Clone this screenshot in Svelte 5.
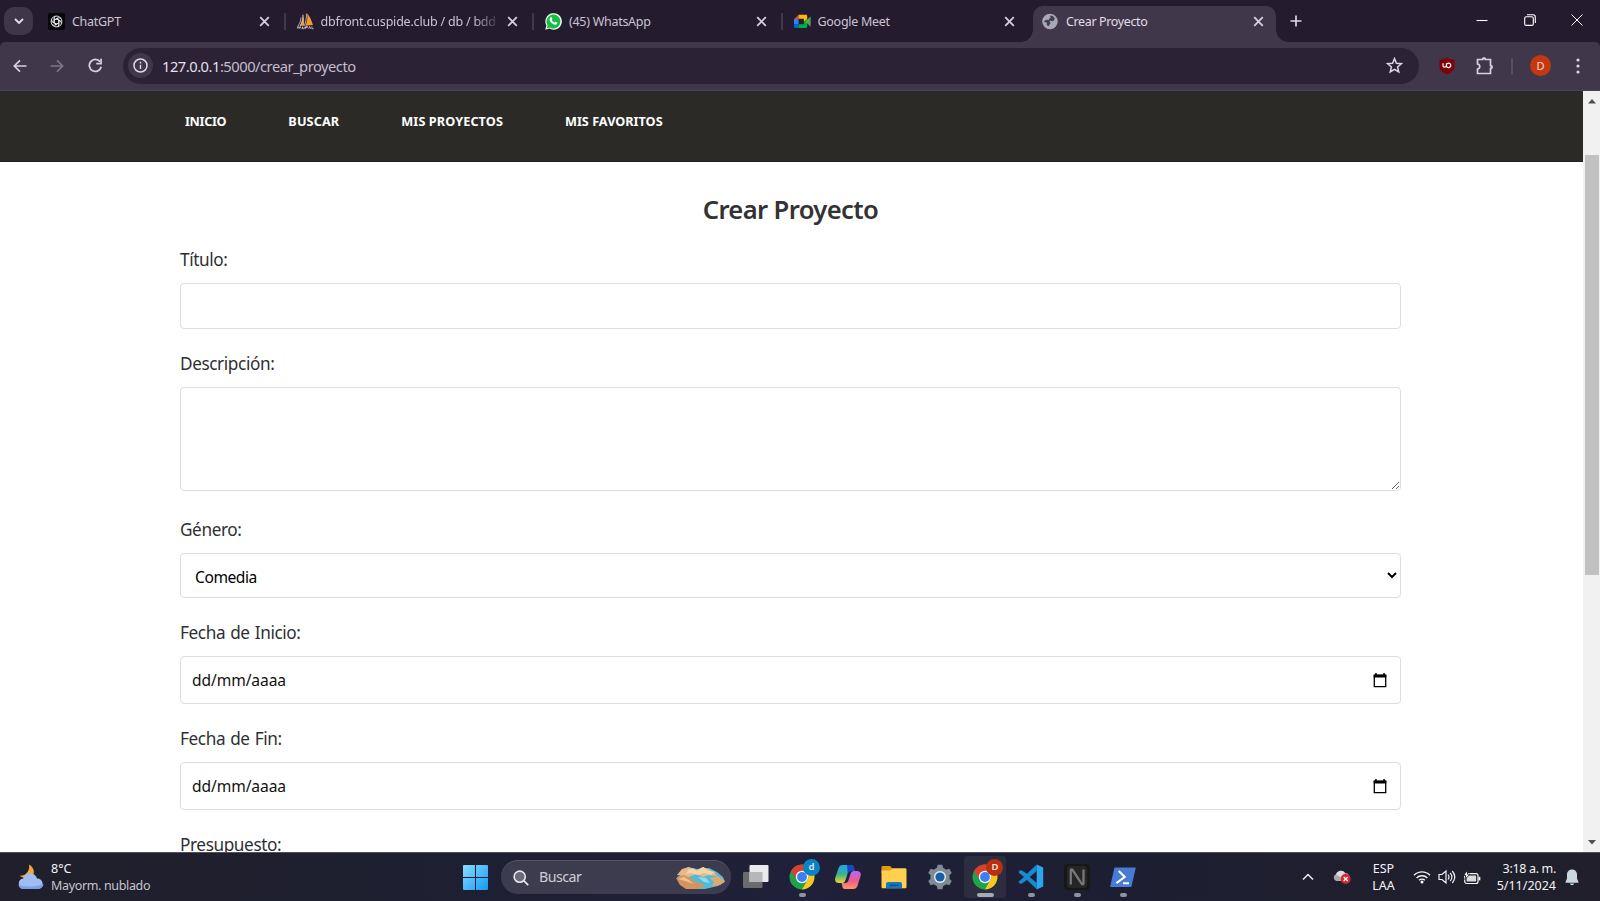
<script>
  const tabs = [
    { icon: 'gpt', title: 'ChatGPT' },
    { icon: 'sail', title: 'dbfront.cuspide.club / db / bdd', fade: true },
    { icon: 'whatsapp', title: '(45) WhatsApp' },
    { icon: 'meet', title: 'Google Meet' },
    { icon: 'globe', title: 'Crear Proyecto', active: true }
  ];
  const nav = ['INICIO', 'BUSCAR', 'MIS PROYECTOS', 'MIS FAVORITOS'];
  const apps = [
    { icon: 'taskview' },
    { icon: 'chrome', badge: 'd', color: '#0784c8', run: true },
    { icon: 'copilot' },
    { icon: 'folder' },
    { icon: 'gear' },
    { icon: 'chrome', badge: 'D', color: '#b8300f', run: true, active: true },
    { icon: 'vscode', run: true },
    { icon: 'notion', run: true },
    { icon: 'powershell', run: true }
  ];
</script>

{#snippet favicon(name)}
  <svg class="favicon" viewBox="0 0 16 16" width="17" height="17">
    {#if name === 'gpt'}
      <rect width="16" height="16" rx="2" fill="#08080a" />
      <g fill="none" stroke="#e8e8e8" stroke-width=".9" transform="translate(8 8)">
        {#each [0, 60, 120, 180, 240, 300] as a}
          <path transform="rotate({a})" d="M-2.2 1.3V-2.6a2.6 2.6 0 0 1 3.9-2.2L4 -3.4M-2.2-1.3 1.5-3.4" />
        {/each}
      </g>
    {:else if name === 'sail'}
      <path d="M5.7 1.2C6 5 4.6 9 2.4 12h4.2C6.9 8 6.7 4 5.7 1.2zM9.4.2c.8 4 .3 8-1.6 11.8L15 11.3C13.8 7 12 3 9.4.2z" fill="#f29a2e" />
      <path d="M3.8 4.2C3.6 7.4 2.6 10 .8 12.4M5.5 1.5C5.6 6 4.8 9 3.2 12M8.8.6C9 5 8.4 9 6.8 12" fill="none" stroke="#c9c3cf" stroke-width=".8" />
      <path d="M0 14.8l1-2.2 1 2 1-2 1 2.2M5.2 12.8v2h1.6v-2M8 14.8v-2h1.8v1H8M11 14.8l.9-2.2.9 2.2M14 12.6v2.2h1.6" fill="none" stroke="#bdb8c8" stroke-width=".9" />
    {:else if name === 'whatsapp'}
      <path d="M.2 15.8 1.3 11.8A7.8 7.8 0 1 1 4.2 14.7z" fill="#f2f5f2" />
      <path d="m1.7 14.3.8-2.7A6.5 6.5 0 1 1 4.6 13.6z" fill="#16bd45" />
      <path d="M5.2 4.2c.4-.5 1-.4 1.2.1l.6 1.4-.7 1c.5 1.1 1.4 1.9 2.6 2.4l.8-.9 1.7.8c.4.2.2 1-.2 1.4-1 .9-2.3.6-3.7-.1-1.3-.7-2.3-1.8-2.900-3-.6-1.200-.3-2.300.6-3.100z" fill="#fff" />
    {:else if name === 'meet'}
      <path d="M0 5.500h4.300v5.200H0z" fill="#2684fc" />
      <path d="M0 10.500h4.300V14H1.200A1.200 1.200 0 0 1 0 12.800z" fill="#0066da" />
      <path d="M0 5.800 4.300 1.600v4.200z" fill="#ea4335" />
      <path d="M4.300 1.600h6.800c.8 0 1.300.5 1.300 1.200v3.500L9.300 8V5.500h-5z" fill="#ffba00" />
      <path d="M4.300 10.500h5V8l3.100-2.300v7.100c0 .7-.5 1.200-1.300 1.200H4.300z" fill="#00ac47" />
      <path d="m10.500 8 5.200-4.600V13z" fill="#4fa35a" />
    {:else}
      <circle cx="7.500" cy="8" r="7.300" fill="#a7a8b5" />
      <path d="M8.600 2.400c-1.500.3-1.200 1.400-.2 1.700-.2 1-1.700.7-1.700 2-.5.8-1.600.2-2.700.4-1.400.2-2 1.200-1.900 2.100.7.500 1.800-.2 2.400.7.300.8-.3 1.300.2 2.300l1.700.9c.3-.7.100-1.600 1-2 .9-.4.6-1.200.1-1.800-.4-.6-.4-1.100.4-1.300.9-.2 1.700.6 2.500.3 1.200-.5.700-1.500 1.700-2-.3-1.400-1.600-2.900-3.500-3.300z" fill="#463f52" />
    {/if}
  </svg>
{/snippet}

{#snippet cross(size = 13)}
  <svg class="cross" viewBox="0 0 14 14" width={size} height={size}><path d="m3 3 8 8m0-8-8 8" fill="none" stroke="#d6cede" stroke-width="1.700" /></svg>
{/snippet}

{#snippet appIcon(name)}
  <svg viewBox="0 0 26 26" width="26" height="26">
    {#if name === 'taskview'}
      <rect x="0" y="8" width="19.500" height="16" rx="1" fill="#6c6b6c" />
      <rect x="6.500" y="1" width="19" height="17" rx="1" fill="#e9eaec" />
      <path d="M6.500 8h13v10h-13z" fill="#b7b7b9" />
    {:else if name === 'chrome'}
      <circle cx="13" cy="13" r="12.500" fill="#1fa34a" />
      <path d="M2.200 6.800A12.500 12.500 0 0 1 23.800 6.800H13A6.200 6.200 0 0 0 7.600 16.100z" fill="#e33b2e" />
      <path d="M23.800 6.800A12.500 12.500 0 0 1 13 25.500L18.400 16.100A6.200 6.200 0 0 0 13 6.800z" fill="#fcc61d" />
      <circle cx="13" cy="13" r="6.200" fill="#f6f8fa" />
      <circle cx="13" cy="13" r="4.900" fill="#3d7ff0" />
    {:else if name === 'copilot'}
      <defs>
        <linearGradient id="cpa" x1="0" y1="0" x2="0" y2="1"><stop offset="0" stop-color="#1ca7ee" /><stop offset=".5" stop-color="#35b391" /><stop offset="1" stop-color="#f2d12a" /></linearGradient>
        <linearGradient id="cpb" x1="0" y1="0" x2="0" y2="1"><stop offset="0" stop-color="#b666ef" /><stop offset=".55" stop-color="#ee5b91" /><stop offset="1" stop-color="#ff9a5b" /></linearGradient>
      </defs>
      <path d="M8 1h8c2 0 2.500 1.500 3 4l.5 2h-4c-2 0-2.500 1-3 3l-2 6c-.8 2.500-2 3-4 3H4c-3 0-4.500-2-3.800-5L3.400 4.500C4.200 2 5.500 1 8 1z" fill="url(#cpa)" />
      <path d="M12 1h4.500c2 0 2.500 2 3 4l.5 2h-4c-2 0-2.500 1-3.200 3.200z" fill="#1649c7" />
      <path d="M18 25h-8c-2 0-2.500-1.500-3-4l-.5-2h3.500c2 0 3-1 3.500-3l2-6c.7-2.300 1.700-3 3.500-3h3c3 0 4.300 2 3.600 5l-3 9.500C21.800 24 20.500 25 18 25z" fill="url(#cpb)" />
    {:else if name === 'folder'}
      <path d="M.5 3.500c0-1 .5-1.500 1.500-1.500h7l2.500 2.700V9H.5z" fill="#df9b11" />
      <path d="M.5 6.500h8.800l2.200-2.300H24c1 0 1.500.5 1.500 1.500v17c0 1-.5 1.500-1.500 1.500H2c-1 0-1.500-.5-1.500-1.500z" fill="#ffd04f" />
      <path d="M5 24.200V20c0-1.300.8-2 2-2h12c1.200 0 2 .7 2 2v4.200z" fill="#1678bf" />
      <path d="M8.500 21.300h9" stroke="#0b4a7e" stroke-width="1.300" />
    {:else if name === 'gear'}
      <g fill="#818b94">
        {#each [0, 60, 120] as a}<path transform="rotate({a} 13 13)" d="M10.600.8h4.800l1.100 5h-7zM9.500 20.200h7l-1.100 5h-4.800z" />{/each}
        <circle cx="13" cy="13" r="9.700" />
      </g>
      <circle cx="13" cy="13" r="6" fill="#e6edf2" /><circle cx="13" cy="13" r="4.600" fill="#1560a6" />
    {:else if name === 'vscode'}
      <path d="M18.700.6 9 9.800 3 5.900.8 7.300v1.500L6 13 .8 17.400v1.400L3 20l6-4 9.700 9.300V19L11.700 13l7-6z" fill="#168bd2" />
      <path d="M18.700.6 25.200 3.600v18.900l-6.500 2.900z" fill="#2ca5ec" />
    {:else if name === 'notion'}
      <rect width="26" height="26" rx="4" fill="#171717" />
      <rect x="3" y="2" width="20" height="22" rx="3" fill="#262626" />
      <path d="M6.800 20.500V6.300c0-1.200 1-1.300 1.800-.3l9 13.600c.7 1 1.900.9 1.900-.3V5.500" fill="none" stroke="#77777a" stroke-width="2.300" />
    {:else}
      <path d="M5.500 3.500h19.300c.7 0 1 .4.800 1.100l-4 17.300c-.2.800-.6 1.100-1.400 1.100H1.100c-.7 0-1-.4-.8-1.100l3.900-17.300c.2-.8.6-1.100 1.300-1.100z" fill="#477bd4" />
      <path d="m8.700 7 6 6-8.300 6.200M13 19.200h6" fill="none" stroke="#fff" stroke-width="2.100" />
    {/if}
  </svg>
{/snippet}

<div class="screen">
  <div class="tabstrip">
    <div class="tabsearch"><svg viewBox="0 0 10 10" width="10" height="10"><path d="m1 3 4 4 4-4" fill="none" stroke="#e4dcea" stroke-width="1.900" /></svg></div>
    <div class="tabs">
      {#each tabs as t, i}
        <div class="tab" class:active={t.active} class:sep={i < 3}>
          {@render favicon(t.icon)}
          <span class="tabtitle" class:fade={t.fade}>{t.title}</span>
          {@render cross(15)}
        </div>
      {/each}
    </div>
    <svg class="plus" viewBox="0 0 12 12" width="12" height="12"><path d="M6 .500v11M.500 6h11" stroke="#ddd5e4" stroke-width="1.700" /></svg>
    <div class="winbtns">
      <svg viewBox="0 0 12 12" width="12" height="12"><path d="M.500 6.500h11" stroke="#fff" stroke-width="1.100" /></svg>
      <svg viewBox="0 0 12 12" width="12" height="12"><g fill="none" stroke="#fff" stroke-width="1.100"><rect x=".700" y="2.800" width="8.600" height="8.600" rx="1.500" /><path d="M3 .700h6a2.300 2.300 0 0 1 2.300 2.300v6" /></g></svg>
      <svg viewBox="0 0 12 12" width="12" height="12"><path d="m.500.500 11 11m0-11-11 11" stroke="#fff" stroke-width="1" /></svg>
    </div>
  </div>

  <div class="toolbar">
    <svg class="nb" viewBox="0 0 14 14" width="14" height="14"><path d="M13.500 7H1.500M7 1.300 1.300 7 7 12.700" fill="none" stroke="#d8cfe0" stroke-width="1.700" /></svg>
    <svg class="nb" viewBox="0 0 14 14" width="14" height="14"><path d="M.500 7h12M7 1.300 12.700 7 7 12.700" fill="none" stroke="#7e7489" stroke-width="1.700" /></svg>
    <svg class="nb" viewBox="0 0 14 14" width="15" height="15"><path d="M12.300 8.200A5.600 5.600 0 1 1 11.300 3.500" fill="none" stroke="#d8cfe0" stroke-width="1.700" /><path d="M13 .600V6H7.700V4.500h3.700V.600z" fill="#d8cfe0" /></svg>
    <div class="urlbar">
      <div class="info"><svg viewBox="0 0 14 14" width="15" height="15"><circle cx="7" cy="7" r="6.100" fill="none" stroke="#e1d9e8" stroke-width="1.400" /><path d="M7 6.200v4M7 3.600v1.500" stroke="#e1d9e8" stroke-width="1.300" /></svg></div>
      <span class="url"><b>127.0.0.1</b>:5000/crear_proyecto</span>
      <svg class="star" viewBox="0 0 16 16" width="17" height="17"><path d="m8 1.500 1.800 4.400 4.700.4-3.600 3.100 1.100 4.700L8 11.600 4 14.100l1.100-4.700L1.500 6.300l4.700-.4z" fill="none" stroke="#ddd5e4" stroke-width="1.400" /></svg>
    </div>
    <svg class="ublock" viewBox="0 0 16 18" width="16" height="18"><path d="M8 .500C10 2 12.500 2.600 15.500 2.500v7c0 4-3.500 6-7.500 8C4 15.500.500 13.500.500 9.500v-7C3.500 2.600 6 2 8 .500z" fill="#7d0305" /><path d="M4 6.200v2.300q0 1.700 1.600 1.700T7.400 8.500V6.200M7.400 8.200A2.200 2.200 0 1 0 9.600 6.200Q8.200 6.200 7.400 7.500" fill="none" stroke="#fff" stroke-width="1.200" /></svg>
    <svg class="puzzle" viewBox="0 0 18 19" width="18" height="19"><path d="M1.500 3.500h5a1.500 1.500 0 0 1 3 0h5v6a1.500 1.500 0 0 1 0 3v5h-13v-4.500c3-.400 3-4.600 0-5z" fill="none" stroke="#d8cfe0" stroke-width="1.700" /><path d="M6 3.500a2 2 0 0 1 4 0zM14.500 9a2 2 0 0 1 0 4z" fill="#d8cfe0" /></svg>
    <i class="divider"></i>
    <div class="avatar">D</div>
    <svg class="dots" viewBox="0 0 4 16" width="4" height="16"><circle cx="2" cy="2" r="1.600" /><circle cx="2" cy="8" r="1.600" /><circle cx="2" cy="14" r="1.600" /></svg>
  </div>

  <div class="viewport">
    <div class="page">
      <nav>{#each nav as n, i}<span class="n{i}">{n}</span>{/each}</nav>
      <form>
        <h2>Crear Proyecto</h2>
        <label for="titulo">Título:</label>
        <input id="titulo" type="text" />
        <label for="desc">Descripción:</label>
        <textarea id="desc"></textarea>
        <label for="genero">Género:</label>
        <select id="genero"><option>Comedia</option></select>
        {#each ['Fecha de Inicio:', 'Fecha de Fin:'] as f}
          <div class="label">{f}</div>
          <div class="date">
            <span>dd/mm/aaaa</span>
            <svg viewBox="0 0 14 15" width="14" height="15"><path d="M1.300 2.500h11.400v11.200H1.300z" fill="none" stroke="#000" stroke-width="1.300" /><path d="M.700 1.500h12.600v3H.700zM2.200 0h1.500v2H2.200zM10.300 0h1.500v2h-1.500z" /></svg>
          </div>
        {/each}
        <div class="label">Presupuesto:</div>
      </form>
    </div>
    <div class="scrollbar">
      <svg viewBox="0 0 8 5" width="8" height="5"><path d="M4 0 8 4.500H0z" fill="#505050" /></svg>
      <div class="track"><div class="thumb"></div></div>
      <svg viewBox="0 0 8 5" width="8" height="5"><path d="M4 4.500 8 0H0z" fill="#505050" /></svg>
    </div>
  </div>

  <div class="taskbar">
    <div class="weather">
      <svg viewBox="0 0 26 26" width="26" height="26"><path d="M11 .500c4.500 2.500 6 7 4 11.500L7 14.500.800 11.500C6 13 12.500 8 11 .500z" fill="#f2a93b" /><path d="M5.500 25a5.300 5.300 0 0 1-.300-10.500C6.500 10.500 10 9 13 9.500c3 .300 5.200 2.300 6 5a5.300 5.300 0 0 1 1.300 10.500z" fill="#9fbcf3" /><path d="M5.500 25a5.300 5.300 0 0 1-5-4c5 2 19 2 25-1a5.300 5.300 0 0 1-5.200 5z" fill="#7fa0e6" /></svg>
      <div class="wtext"><span>8°C</span><span class="w1">Mayorm. nublado</span></div>
    </div>
    <svg class="start" viewBox="0 0 25 25" width="25" height="25"><defs><linearGradient id="wg" x1="0" y1="0" x2="1" y2="1"><stop offset="0" stop-color="#8bdcff" /><stop offset="1" stop-color="#119af5" /></linearGradient></defs><path d="M0 1q0-1 1-1h11v12H0zM13 0h11q1 0 1 1v11H13zM0 13h12v12H1q-1 0-1-1zM13 13h12v11q0 1-1 1H13z" fill="url(#wg)" /></svg>
    <div class="search">
      <svg viewBox="0 0 16 16" width="16" height="16"><circle cx="6.700" cy="6.700" r="5.600" fill="#6b6a7a" stroke="#e5e5ea" stroke-width="1.600" /><path d="m10.700 10.700 4.500 4.500" stroke="#e5e5ea" stroke-width="1.700" /></svg>
      <span>Buscar</span>
      <svg class="beach" viewBox="0 0 49 23" width="49" height="23">
        <path d="M5 5 12 1l9 2 12-1 8 4 6 5 2 5-7 4-13 3H13L4 18 1 11l4-2z" fill="#57b9d3" />
        <path d="m1 9 5-6 7-2 5 4 9-4 7 3 4 2 3 4-8-1-6 2-7-3-7 3-6-1z" fill="#e6b98c" />
        <path d="M12 4q5-4 9 1l6-4 6 4 6 1-4 3-7-2-6 2-7-2-5 1z" fill="#f5d4ac" />
        <path d="m0 12 8-3 6 3 5 4 8 2 1 3-7 2H10L4 19z" fill="#d4945f" />
        <path d="m2 13 6-2 5 3 5 4-9-3z" fill="#efbf8d" />
        <path d="m34 12 8-2 7 5-5 4-8 1 2-4z" fill="#e0a873" />
        <path d="m22 11 8 1 4 5-6-1z" fill="#8be0ec" />
      </svg>
    </div>
    <div class="apps">
      {#each apps as a}
        <div class="app" class:active={a.active}>
          {@render appIcon(a.icon)}
          {#if a.badge}<b class="badge" style="background:{a.color}">{a.badge}</b>{/if}
          {#if a.run}<i></i>{/if}
        </div>
      {/each}
    </div>
    <div class="tray">
      <svg class="chev" viewBox="0 0 12 8" width="12" height="8"><path d="m1 6.500 5-5 5 5" fill="none" stroke="#eee" stroke-width="1.500" /></svg>
      <svg class="cloud" viewBox="0 0 18 14" width="18" height="14"><path d="M3.500 11A3.500 3.500 0 0 1 3 4.300C4.500.500 9.500-.500 12 3c3 0 4.500 2 4.500 4.500L10 11z" fill="#aaa9ae" /><path d="M3 4.500C4.500.500 9.500-.500 12 3L7 7z" fill="#dddcdf" /><circle cx="12.700" cy="9" r="4.900" fill="#d9252f" /><path d="m10.700 7 4 4m0-4-4 4" stroke="#fff" stroke-width="1.300" /></svg>
      <div class="lang"><span>ESP</span><span>LAA</span></div>
      <svg viewBox="0 0 18 14" width="18" height="14"><g fill="none" stroke="#f2f2f4" stroke-width="1.400"><path d="M1 5.200a11.200 11.200 0 0 1 16 0M3.600 8a7.600 7.600 0 0 1 10.800 0M6.100 10.300a4.200 4.200 0 0 1 5.800 0" /></g><circle cx="9" cy="12" r="1.500" fill="#fff" /></svg>
      <svg viewBox="0 0 18 16" width="18" height="16"><g fill="none" stroke="#f2f2f4" stroke-width="1.200"><path d="M1 5.500h3L8 2v12l-4-3.500H1zM10 5.500q2 2.500 0 5M12.200 3.800q3.500 4.200 0 8.400M14.300 2q5 6 0 12" /></g></svg>
      <svg viewBox="0 0 18 15" width="18" height="15"><rect x="1.700" y="3.700" width="13.300" height="9.800" rx="2" fill="none" stroke="#f6f6f7" stroke-width="1.200" /><rect x="3.600" y="5.600" width="9.500" height="6" rx=".600" fill="#dcdce0" /><path d="M16.400 6.800v3.600" stroke="#eee" stroke-width="1.900" /><path d="M4.500.200.600 5.500h2.200L1.800 9.500 7 4.200H4.500z" fill="#fff" stroke="#1f1e2c" stroke-width=".900" /></svg>
      <div class="clock"><span class="c0">3:18 a. m.</span><span>5/11/2024</span></div>
      <svg class="bell" viewBox="0 0 14 17" width="14" height="17"><path d="M7 .500c-3 0-5 2.300-5 5v4L.500 13v.800h13V13L12 9.500v-4c0-2.700-2-5-5-5zM4.800 14.600a2.300 2.300 0 0 0 4.400 0z" fill="#ccd6de" /></svg>
    </div>
  </div>
</div>

<style>
  :global(body) { margin: 0; overflow: hidden; }
  * { box-sizing: border-box; }
  svg { display: block; flex: none; }
  .screen { width: 1600px; height: 901px; display: flex; flex-direction: column; font-family: "Noto Sans", "Open Sans", sans-serif; white-space: nowrap; background: #fff; overflow: hidden; }
  .tabstrip { height: 42px; flex: none; background: #241c2e; display: flex; align-items: flex-start; position: relative; z-index: 1; }
  .tabsearch { width: 29px; height: 28px; margin: 7px 0 0 4px; border-radius: 10px; background: #3f364a; display: grid; place-items: center; }
  .tabs { display: flex; margin: 6px 0 0 6px; }
  .tab { width: 248.500px; height: 36px; display: flex; align-items: center; position: relative; padding: 0 16px 6px 9px; }
  .tab.sep::after { content: ""; position: absolute; right: 2px; top: 7px; width: 2px; height: 17px; background: #40384b; }
  .tab.active { background: #40374b; border-radius: 10px 10px 0 0; width: 243px; padding-right: 10px; }
  .tab.active::before, .tab.active::after { content: ""; position: absolute; bottom: 0; width: 12px; height: 12px; }
  .tab.active::before { left: -12px; background: radial-gradient(circle at 0 0, transparent 11.500px, #40374b 12px); }
  .tab.active::after { right: -12px; background: radial-gradient(circle at 100% 0, transparent 11.500px, #40374b 12px); }
  .tabtitle { margin-left: 7px; padding-top: 1px; flex: 1; font-size: 12.500px; letter-spacing: -.28px; color: #cbc2d3; overflow: hidden; line-height: 20px; }
  .tabtitle.fade { letter-spacing: -.21px; max-width: 175px; margin-right: auto; -webkit-mask-image: linear-gradient(90deg, #000 152px, rgba(0, 0, 0, .2) 175px); mask-image: linear-gradient(90deg, #000 152px, rgba(0, 0, 0, .2) 175px); }
  .active .tabtitle { color: #e2dce8; letter-spacing: -.37px; }
  .plus { margin: 15px 0 0 14px; }
  .winbtns { margin: 14px 17px 0 auto; display: flex; gap: 35.500px; }

  .toolbar { height: 49px; flex: none; background: #40374b; border-bottom: 1px solid #4b4354; border-radius: 5px 5px 0 0; display: flex; align-items: center; padding-bottom: 1px; box-shadow: 0 -5px 0 0 #241c2e; }
  .nb:nth-child(1) { margin-left: 13px; }
  .nb:nth-child(2) { margin-left: 23px; }
  .nb:nth-child(3) { margin-left: 24px; }
  .urlbar { margin-left: 20px; width: 1296px; height: 36px; border-radius: 18px; background: #2b2335; display: flex; align-items: center; padding: 0 16px 0 5px; }
  .info { width: 25px; height: 25px; border-radius: 50%; background: #40374b; display: grid; place-items: center; }
  .url { margin-left: 9px; font-size: 14.700px; letter-spacing: -.48px; color: #c5bccd; }
  .url b { font-weight: 400; color: #e6dfec; }
  .star { margin-left: auto; }
  .ublock { margin-left: 20px; }
  .puzzle { margin-left: 21px; }
  .divider { width: 2px; height: 16px; margin-left: 17px; background: #574d62; }
  .avatar { width: 21px; height: 21px; margin-left: 17px; border-radius: 50%; background: #c5380f; color: #f8d9cf; font-size: 11px; line-height: 21px; text-align: center; }
  .dots { margin-left: 25px; fill: #ded6e4; }

  .viewport { height: 761px; flex: none; display: flex; overflow: hidden; }
  .page { flex: 1; overflow: hidden; background: #fff; }
  nav { height: 71px; background: #2c2a27; border-bottom: 1px solid #24211f; padding: 20px 0 0 185px; display: flex; gap: 62px; color: #fff; font-size: 12.700px; font-weight: 700; line-height: 20px; }
  nav span { flex: none; }
  .n0 { letter-spacing: -.33px; }
  .n1 { letter-spacing: .12px; }
  .n2 { letter-spacing: .08px; }
  form { width: 1221px; margin-left: 180px; display: flex; flex-direction: column; color: #2d3033; }
  h2 { margin: 0; height: 63px; padding-top: 28px; line-height: 40px; text-align: center; font-size: 25.600px; letter-spacing: -.62px; font-weight: 600; color: #333; }
  label, .label { height: 58px; flex: none; padding: 21px 0 0 0; font-size: 17.200px; letter-spacing: -.4px; word-spacing: 1px; line-height: 28px; }
  input, textarea, select, .date { width: 100%; flex: none; border: 1px solid #ddd; border-radius: 4px; background: #fff; font-family: inherit; font-size: 15.600px; color: #000; margin: 0; outline: 0; }
  input { height: 46px; }
  textarea { height: 104px; margin-bottom: 4px; resize: both; display: block; }
  select { height: 45px; padding: 11px 1px 10px 10px; letter-spacing: -.45px; }
  .date { height: 48px; display: flex; align-items: center; justify-content: space-between; padding: 0 13px 0 11px; letter-spacing: -.1px; color: #111; }
  .scrollbar { width: 17px; background: #f1f1f1; display: flex; flex-direction: column; align-items: center; padding: 8px 0 7px; }
  .track { flex: 1; width: 14px; padding-top: 51px; }
  .thumb { height: 420px; background: #c1c1c1; }

  .taskbar { height: 49px; flex: none; background: linear-gradient(90deg, #201f2b, #1e1f30 25%, #20203a 50%, #1d1e31 70%, #201f2b); border-top: 1px solid #504f5b; display: flex; align-items: center; color: #f4f4f6; font-size: 12.500px; }
  .weather { width: 463px; padding-left: 18px; display: flex; align-items: center; gap: 7px; }
  .wtext { display: flex; flex-direction: column; line-height: 17px; align-items: flex-start; padding-bottom: 1px; }
  .w1 { color: #c5c5cb; letter-spacing: -.35px; }
  .search { margin-left: 13px; width: 230px; height: 34px; border-radius: 17px; background: #3d3c4e; border-top: 1px solid #555465; display: flex; align-items: center; padding: 0 6px 0 12px; font-size: 14.200px; letter-spacing: -.5px; color: #cfced6; }
  .search span { margin-left: 10px; padding-bottom: 2px; }
  .beach { margin-left: auto; }
  .apps { display: flex; margin-left: 4px; gap: 3.900px; }
  .app { width: 42px; height: 42px; border-radius: 4px; display: grid; place-items: center; position: relative; }
  .app.active { background: #2d2d40; }
  .badge { position: absolute; right: 3px; top: 3px; width: 17px; height: 17px; border-radius: 50%; font-size: 9.500px; line-height: 16px; text-align: center; color: #f3e4df; font-weight: 600; }
  .app i { position: absolute; bottom: 1px; left: 18px; width: 7px; height: 4px; border-radius: 2px; background: #92929e; }
  .app.active i { left: 13px; width: 17px; background: #a5a8b6; }
  .tray { margin-left: auto; display: flex; align-items: center; padding-right: 21px; }
  .tray > svg { margin-right: 7px; }
  .tray > .chev { margin-right: 19px; }
  .tray > .cloud { margin-right: 21px; }
  .lang { width: 23px; text-align: center; line-height: 17px; display: flex; flex-direction: column; align-items: center; margin-right: 18px; }
  .clock { width: 68px; display: flex; flex-direction: column; align-items: flex-end; line-height: 17px; padding-bottom: 1px; }
  .c0 { letter-spacing: -.33px; }
  .tray > .bell { margin: 0 0 0 9px; }
</style>
